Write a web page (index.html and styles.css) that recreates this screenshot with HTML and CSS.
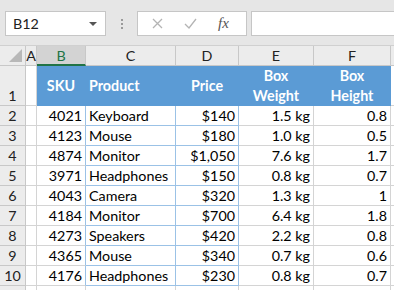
FILE: index.html
```html
<!DOCTYPE html>
<html>

<head>
  <meta charset="UTF-8">
  <meta name="viewport" content="width=device-width, initial-scale=1.0">
  <title>Products</title>
  <link rel="stylesheet" href="styles.css">
</head>

<body>
  <div class="toolbar">
    <div class="namebox">
      <span>B12</span>
      <span class="namebox__arrow"></span>
    </div>
    <div class="grip"><i></i><i></i><i></i></div>
    <div class="buttons">
      <svg class="icon icon--cancel" width="11" height="11" viewBox="0 0 11 11">
        <path d="M1 1 L10 10 M10 1 L1 10" />
      </svg>
      <svg class="icon icon--enter" width="13" height="11" viewBox="0 0 13 11">
        <path d="M1 6 L5 10 L12 1" />
      </svg>
      <span class="fx">fx</span>
    </div>
    <div class="formula"></div>
  </div>

  <div class="sheet">
    <!-- column headings -->
    <div class="head corner"><span class="corner__tri"></span></div>
    <div class="head col">A</div>
    <div class="head col col--sel">B</div>
    <div class="head col">C</div>
    <div class="head col">D</div>
    <div class="head col">E</div>
    <div class="head col">F</div>
    <div class="head col"></div>

    <!-- row 1 -->
    <div class="head row row--tall">1</div>
    <div class="cell"></div>
    <div class="cell th th--center">SKU</div>
    <div class="cell th">Product</div>
    <div class="cell th th--center">Price</div>
    <div class="cell th th--center">Box<br>Weight</div>
    <div class="cell th th--center">Box<br>Height</div>
    <div class="cell"></div>

    <div class="head row">2</div>
    <div class="cell"></div>
    <div class="cell num b">4021</div>
    <div class="cell blue">Keyboard</div>
    <div class="cell num blue">$140</div>
    <div class="cell num">1.5 kg</div>
    <div class="cell num">0.8</div>
    <div class="cell"></div>

    <div class="head row">3</div>
    <div class="cell"></div>
    <div class="cell num b">4123</div>
    <div class="cell blue">Mouse</div>
    <div class="cell num blue">$180</div>
    <div class="cell num">1.0 kg</div>
    <div class="cell num">0.5</div>
    <div class="cell"></div>

    <div class="head row">4</div>
    <div class="cell"></div>
    <div class="cell num b">4874</div>
    <div class="cell blue">Monitor</div>
    <div class="cell num blue">$1,050</div>
    <div class="cell num">7.6 kg</div>
    <div class="cell num">1.7</div>
    <div class="cell"></div>

    <div class="head row">5</div>
    <div class="cell"></div>
    <div class="cell num b">3971</div>
    <div class="cell blue">Headphones</div>
    <div class="cell num blue">$150</div>
    <div class="cell num">0.8 kg</div>
    <div class="cell num">0.7</div>
    <div class="cell"></div>

    <div class="head row">6</div>
    <div class="cell"></div>
    <div class="cell num b">4043</div>
    <div class="cell blue">Camera</div>
    <div class="cell num blue">$320</div>
    <div class="cell num">1.3 kg</div>
    <div class="cell num">1</div>
    <div class="cell"></div>

    <div class="head row">7</div>
    <div class="cell"></div>
    <div class="cell num b">4184</div>
    <div class="cell blue">Monitor</div>
    <div class="cell num blue">$700</div>
    <div class="cell num">6.4 kg</div>
    <div class="cell num">1.8</div>
    <div class="cell"></div>

    <div class="head row">8</div>
    <div class="cell"></div>
    <div class="cell num b">4273</div>
    <div class="cell blue">Speakers</div>
    <div class="cell num blue">$420</div>
    <div class="cell num">2.2 kg</div>
    <div class="cell num">0.8</div>
    <div class="cell"></div>

    <div class="head row">9</div>
    <div class="cell"></div>
    <div class="cell num b">4365</div>
    <div class="cell blue">Mouse</div>
    <div class="cell num blue">$340</div>
    <div class="cell num">0.7 kg</div>
    <div class="cell num">0.6</div>
    <div class="cell"></div>

    <div class="head row">10</div>
    <div class="cell"></div>
    <div class="cell num b">4176</div>
    <div class="cell blue">Headphones</div>
    <div class="cell num blue">$230</div>
    <div class="cell num">0.8 kg</div>
    <div class="cell num">0.7</div>
    <div class="cell"></div>

    <!-- row 11, cut by the window -->
    <div class="head row"></div>
    <div class="cell"></div>
    <div class="cell"></div>
    <div class="cell"></div>
    <div class="cell"></div>
    <div class="cell"></div>
    <div class="cell"></div>
    <div class="cell"></div>
  </div>
</body>

</html>
```

FILE: styles.css
```css
* {
  padding: 0;
  margin: 0;
  box-sizing: border-box;
}

body {
  width: 394px;
  height: 290px;
  overflow: hidden;
  font-family: Lato, "Open Sans", sans-serif;
  font-size: 14.3px;
  color: #000;
  background: #fff;
}

/* formula bar */

.toolbar {
  height: 46px;
  display: flex;
  align-items: flex-start;
  padding: 11px 0 0 5px;
  background: #e6e6e6;
  border-bottom: 1px solid #d0d0d0;
}

.namebox {
  width: 101px;
  height: 25px;
  display: flex;
  align-items: center;
  justify-content: space-between;
  padding: 0 8px 0 7px;
  background: #fff;
  border: 1px solid #c6c6c6;
  color: #222;
}

.namebox__arrow {
  width: 0;
  height: 0;
  border-left: 4px solid transparent;
  border-right: 4px solid transparent;
  border-top: 4px solid #555;
}

.grip {
  width: 31px;
  height: 25px;
  display: flex;
  flex-direction: column;
  align-items: center;
  justify-content: center;
  gap: 2px;
}

.grip i {
  width: 2px;
  height: 2px;
  background: #9a9a9a;
}

.buttons {
  width: 110px;
  height: 25px;
  display: flex;
  align-items: center;
  padding-left: 14px;
  background: #fff;
  border: 1px solid #c6c6c6;
}

.icon {
  fill: none;
  stroke: #b4b4b4;
  stroke-width: 1.3;
}

.icon--enter {
  margin-left: 21px;
}

.fx {
  margin-left: 21px;
  font-family: "Liberation Serif", serif;
  font-style: italic;
  font-size: 15px;
  color: #555;
}

.formula {
  flex: 1;
  height: 25px;
  margin-left: 4px;
  background: #fff;
  border: 1px solid #c6c6c6;
  border-right: none;
}

/* grid */

.sheet {
  height: 244px;
  overflow: hidden;
  display: grid;
  grid-template-columns: 26px 11px 49px 90px 63px 75px 77px 1fr;
  grid-template-rows: 20px 40px repeat(10, 20px);
}

.head {
  display: flex;
  align-items: center;
  justify-content: center;
  background: #ececec;
  border-right: 1px solid #c8c8c8;
  border-bottom: 1px solid #c8c8c8;
  color: #222;
}

.corner {
  position: relative;
}

.corner__tri {
  position: absolute;
  right: 3px;
  bottom: 3px;
  width: 0;
  height: 0;
  border-left: 13px solid transparent;
  border-bottom: 13px solid #b8b8b8;
}

.col--sel {
  background: #d3d3d3;
  border-bottom: 2px solid #217346;
  color: #217346;
}

.row--tall {
  align-items: flex-end;
  padding-bottom: 1px;
}

.cell {
  display: flex;
  align-items: center;
  padding: 0 3px;
  border-right: 1px solid #d4d4d4;
  border-bottom: 1px solid #d4d4d4;
  white-space: nowrap;
}

.th {
  background: #5b9bd5;
  border-color: #5b9bd5;
  color: #fff;
  font-weight: bold;
  line-height: 20px;
}

.th--center {
  justify-content: center;
  text-align: center;
}

.num {
  justify-content: flex-end;
}

.b {
  border-right-color: #9bc2e6;
}

.blue {
  border-right-color: #9bc2e6;
  border-bottom-color: #9bc2e6;
}
```
